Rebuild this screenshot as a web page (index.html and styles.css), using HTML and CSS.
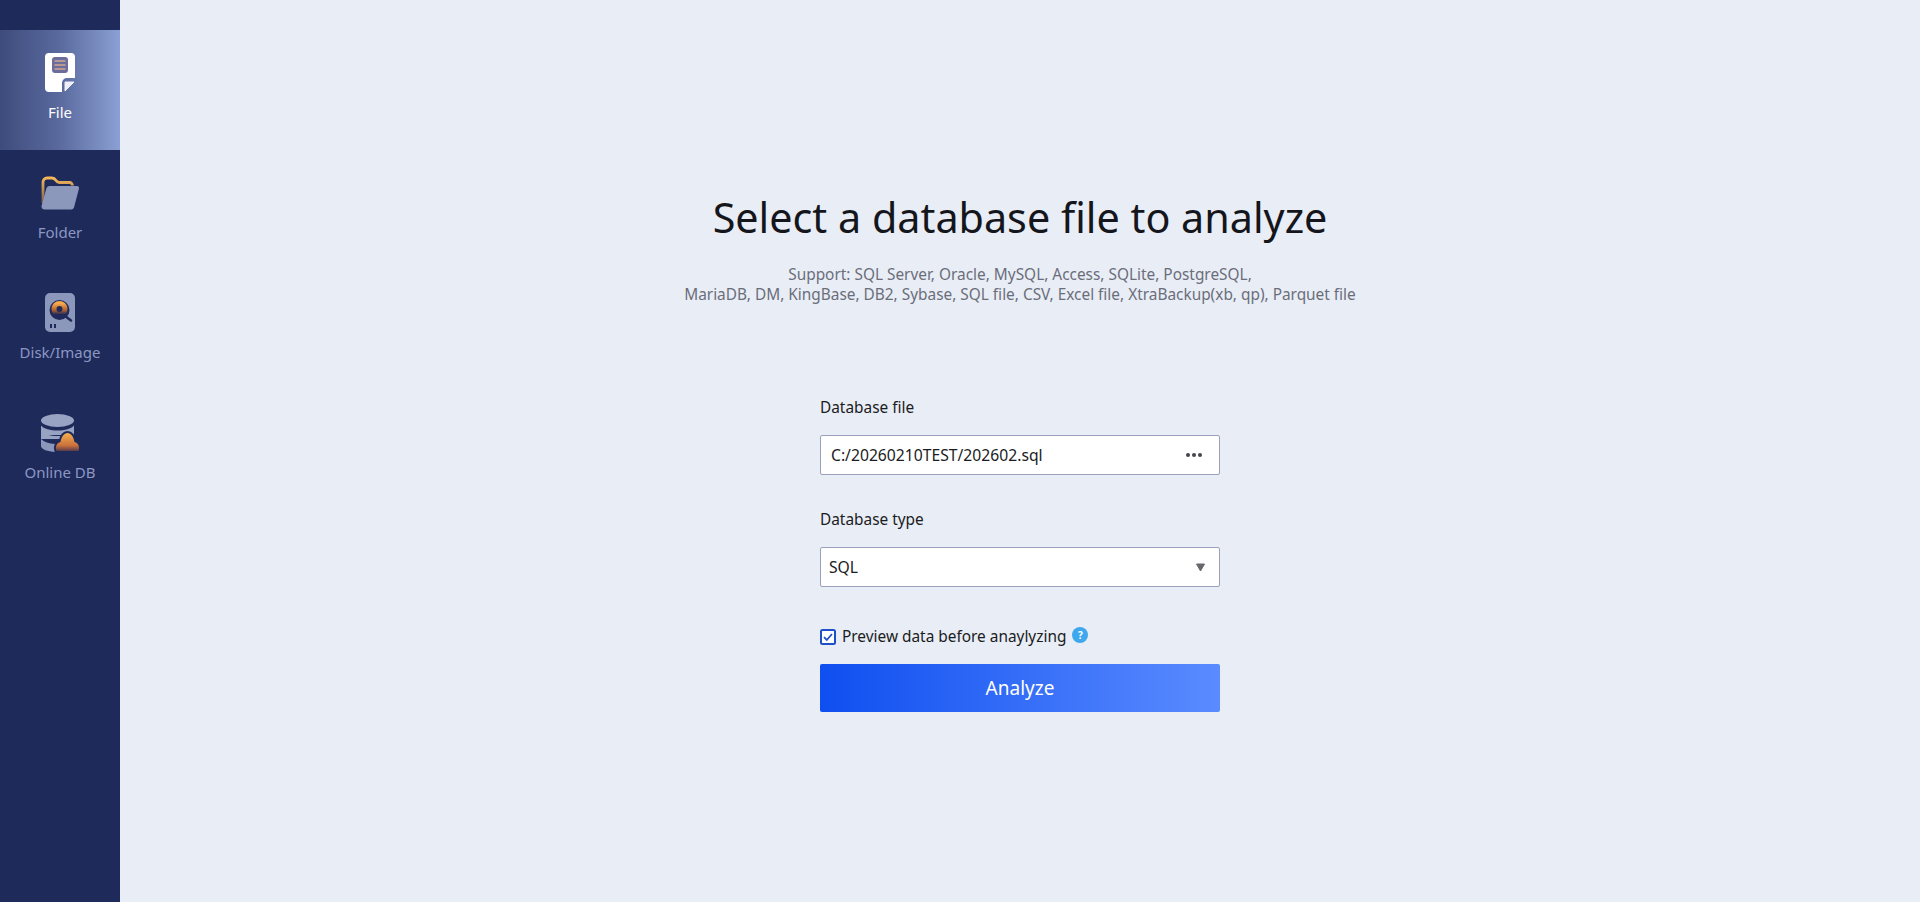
FILE: index.html
```html
<!DOCTYPE html>
<html lang="en">
<head>
<meta charset="utf-8">
<title>Select a database file</title>
<link rel="stylesheet" href="styles.css">
</head>
<body>
<div class="app">
  <nav class="sidebar">
    <div class="nav-item active">
      <svg class="nav-icon" viewBox="0 0 40 40">
        <path d="M9 0h22a4 4 0 0 1 4 4v21h-8a5 5 0 0 0-5 5v9H9a4 4 0 0 1-4-4V4a4 4 0 0 1 4-4z" fill="#fff"/>
        <path d="M25 29h9l-9 9z" fill="#eef0f8" stroke="#eef0f8" stroke-linejoin="round"/>
        <rect x="12" y="4" width="16" height="16" rx="3" fill="#6b6d9c"/>
        <path d="M14.500 8h11M14.500 12h11M14.500 16h11" stroke="#d3a58f" stroke-width="1.300"/>
      </svg>
      <span>File</span>
    </div>
    <div class="nav-item">
      <svg class="nav-icon" viewBox="0 0 40 40">
        <defs>
          <linearGradient id="fg" x1="0" y1="0" x2="0" y2="1"><stop offset="0" stop-color="#f7b85a"/><stop offset="1" stop-color="#7a5a4a"/></linearGradient>
        </defs>
        <path d="M3 30V9a4 4 0 0 1 4-4h5c2 0 3 1 4 2.500s2 2 3.500 2h10a3 3 0 0 1 3 3" fill="none" stroke="url(#fg)" stroke-width="2.800"/>
        <path d="M9.500 13h27.500a2 2 0 0 1 2 2.500l-5 19a3 3 0 0 1-3 2H4.500a3 3 0 0 1-3-3.500l5-18a3.500 3.500 0 0 1 3-2z" fill="#8b97bb"/>
      </svg>
      <span>Folder</span>
    </div>
    <div class="nav-item">
      <svg class="nav-icon" viewBox="0 0 40 40">
        <defs>
          <linearGradient id="dg" x1="0" y1="0" x2="0" y2="1"><stop offset="0" stop-color="#f6a84a"/><stop offset=".6" stop-color="#b3612f"/><stop offset="1" stop-color="#1f2a5a"/></linearGradient>
        </defs>
        <rect x="5" y="0" width="30" height="39" rx="5" fill="#8b97bb"/>
        <path d="M25 23l6 4.500" stroke="#1f2a5a" stroke-width="2.500" stroke-linecap="round"/>
        <circle cx="19.500" cy="17" r="10" fill="#1f2a5a"/>
        <circle cx="19.500" cy="16" r="5.500" fill="none" stroke="url(#dg)" stroke-width="5"/>
        <rect x="10" y="31" width="2" height="4" fill="#1f2a5a"/>
        <rect x="14" y="31" width="2" height="4" fill="#1f2a5a"/>
      </svg>
      <span>Disk/Image</span>
    </div>
    <div class="nav-item">
      <svg class="nav-icon" viewBox="0 0 40 40">
        <defs>
          <linearGradient id="cg" x1="0" y1="0" x2="0" y2="1"><stop offset="0" stop-color="#f7b04e"/><stop offset=".7" stop-color="#c9703c"/><stop offset="1" stop-color="#5a3a4a"/></linearGradient>
        </defs>
        <ellipse cx="17.500" cy="7.500" rx="16.500" ry="6.500" fill="#98a3c4"/>
        <path d="M1 12.500c3 3.500 9 5 16.500 5s13.500-1.500 16.500-5V22H1z" fill="#98a3c4"/>
        <path d="M1 18c3 3.500 9 5 16.500 5s13.500-1.500 16.500-5v8H1z" fill="#98a3c4"/>
        <path d="M1 26c3 3 8 4.500 14 5v8C8 38.500 1 36.500 1 33z" fill="#8b97bb"/>
        <path d="M16.500 38c-1.500-4 0-8 4-9C21.500 23.500 24 20 27.500 20S33.500 23.500 34.500 29c4 1 5.500 5 4 9z" fill="url(#cg)" stroke="#1e2a5a" stroke-width="4" paint-order="stroke"/>
      </svg>
      <span>Online DB</span>
    </div>
  </nav>
  <main class="main">
    <h1 class="title">Select a database file to analyze</h1>
    <p class="support">Support: SQL Server, Oracle, MySQL, Access, SQLite, PostgreSQL,<br>MariaDB, DM, KingBase, DB2, Sybase, SQL file, CSV, Excel file, XtraBackup(xb, qp), Parquet file</p>
    <form class="form">
      <div class="label">Database file</div>
      <div class="field file-field">
        <span>C:/20260210TEST/202602.sql</span>
        <span class="dots"><i></i><i></i><i></i></span>
      </div>
      <div class="label type-label">Database type</div>
      <div class="field select-field">
        <span>SQL</span>
        <svg class="caret" viewBox="0 0 10 9"><path d="M1 1h8L5 8z" fill="#66686e" stroke="#66686e" stroke-linejoin="round"/></svg>
      </div>
      <div class="check-row">
        <svg class="check" viewBox="0 0 16 16">
          <rect x="1" y="1" width="14" height="14" rx="1.500" fill="#fff" stroke="#1f50c8" stroke-width="2"/>
          <path d="M4 8.200l2.800 2.800L12 5" fill="none" stroke="#1f50c8" stroke-width="1.800"/>
        </svg>
        <span>Preview data before anaylyzing</span>
        <span class="help">?</span>
      </div>
      <div class="analyze">Analyze</div>
    </form>
  </main>
</div>
</body>
</html>
```
FILE: styles.css
```css
* { box-sizing: border-box; }
html, body { margin: 0; height: 100%; }
body { font-family: "Noto Sans", "Open Sans", sans-serif; background: #e9edf6; color: #1a1c22; overflow: hidden; }
.app { display: flex; height: 902px; }
.sidebar { width: 120px; flex: none; background: #1e2a5a; padding-top: 30px; }
.nav-item { height: 120px; display: flex; flex-direction: column; align-items: center; padding-top: 23px; color: #8c97c2; font-size: 15px; line-height: 20px; }
.nav-item.active { background: linear-gradient(90deg, #3e4b7c 0%, #5a6a9e 50%, #8ba0d4 100%); color: #fff; }
.nav-icon { width: 40px; height: 40px; margin-bottom: 9px; display: block; }
.main { flex: 1; display: flex; flex-direction: column; align-items: center; padding-top: 186px; }
.title { margin: 0; font-size: 41.3px; line-height: 62px; font-weight: 400; color: #14161c; }
.support { margin: 17px 0 0; font-size: 15.4px; line-height: 20px; color: #6a6e7a; text-align: center; }
.form { width: 400px; margin-top: 93px; display: flex; flex-direction: column; }
.label { font-size: 15.4px; line-height: 20px; height: 20px; }
.type-label { margin-top: 35px; }
.field { height: 40px; margin-top: 17px; background: #fff; border: 1px solid #9ca0bf; border-radius: 2px; display: flex; align-items: center; justify-content: space-between; font-size: 15.7px; }
.file-field { padding: 0 17px 0 10px; }
.select-field { padding: 0 13px 0 8px; }
.dots { display: flex; gap: 2px; }
.dots i { width: 4px; height: 4px; border-radius: 50%; background: #44464c; }
.caret { width: 11px; height: 9px; }
.check-row { display: flex; align-items: center; margin-top: 40px; font-size: 15.4px; line-height: 20px; }
.check { width: 16px; height: 16px; margin-right: 6px; }
.help { width: 16px; height: 16px; margin: -4px 0 0 6px; border-radius: 50%; background: #3fa7ee; color: #fff; font-size: 10px; line-height: 16px; text-align: center; font-weight: 700; }
.analyze { height: 48px; margin-top: 17px; border-radius: 2px; background: linear-gradient(90deg, #0f4ff0 0%, #5a8bff 100%); color: #fff; font-size: 19px; display: flex; align-items: center; justify-content: center; }
```
